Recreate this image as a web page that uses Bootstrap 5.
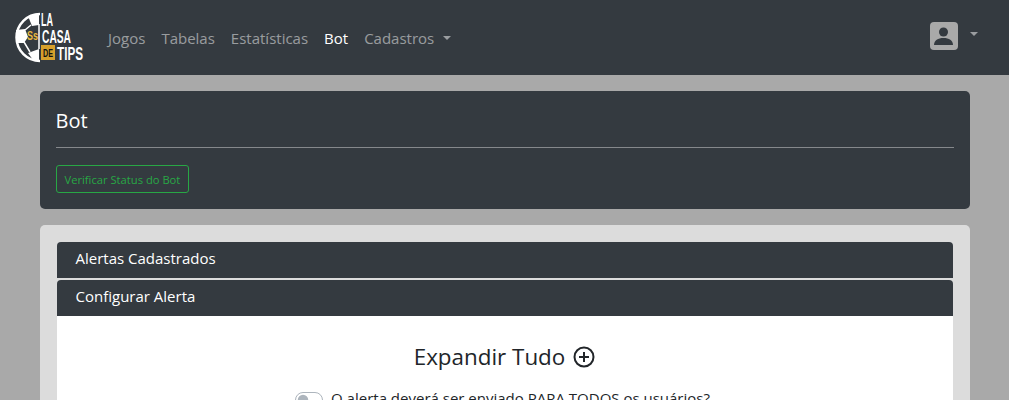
<!DOCTYPE html>
<html lang="pt-br">
  <head>
    <meta charset="utf-8">
    <title>Bot - La Casa de Tips</title>
    <link href="https://cdn.jsdelivr.net/npm/bootstrap@5.3.0/dist/css/bootstrap.min.css" rel="stylesheet">
    <style>
      html, body { height: 100%; overflow: hidden; }
      body { background: #a9a9a9; font-family: "Open Sans", "Noto Sans", sans-serif; color: #212529; }
      .top-bar { background: #343a40; height: 75px; padding: 0 16px 0 14px; }
      .top-bar .navbar-brand { padding: 0; margin-right: 14px; line-height: 0; }
      .top-bar .nav-link { color: rgba(255,255,255,.5); font-size: 15px; padding: 8px; line-height: 24px; }
      .top-bar .nav-link.active { color: #fff; }
      .top-bar .nav-link.dropdown-toggle::after { margin-left: 9px; }
      .user-toggle { color: rgba(255,255,255,.5); display: flex; align-items: center; padding: 0; margin-right: 15px; margin-top: -3px; }
      .user-toggle::after { margin-left: 12px; margin-top: -4px; }
      .page-wrap { width: 960px; max-width: none; padding: 16px 15px 0; margin: 0 auto; }
      .bot-card { background: #343a40; border-radius: 5px; padding: 16px; height: 118px; color: #fff; }
      .bot-title { font-size: 20px; line-height: 28px; font-weight: 400; margin: 0; }
      .bot-rule { border: 0; border-top: 1px solid #fff; opacity: .4; margin: 12px 0 17px; }
      .btn-status { font-size: 11.2px; line-height: 17px; padding: 4px 8px; border-radius: 3px; height: 28px; color: #28a745; border: 1px solid #28a745; background: transparent; }
      .alert-card { background: #dcdcdc; border-radius: 5px 5px 0 0; margin-top: 16px; padding: 17px; height: 300px; }
      .acc-head { background: #343a40; color: #fff; height: 36px; line-height: 33px; padding: 0 19px; font-size: 15px; border-radius: 4px 4px 0 0; margin-bottom: 2px; }
      .acc-body { background: #fff; height: 200px; margin-top: -2px; text-align: center; padding-top: 24px; }
      .expand-title { font-size: 22.4px; line-height: 34px; margin: 0; display: flex; align-items: center; justify-content: center; gap: 8px; }
      .send-all { margin-top: 13px; font-size: 15px; display: flex; justify-content: center; align-items: flex-start; gap: 8px; padding: 0 4px 0 0; }
      .send-all .form-check-input { width: 28px; height: 16px; margin: 5px 0 0; background-color: #fff; border-color: #adb5bd; background-image: url("data:image/svg+xml,%3csvg xmlns='http://www.w3.org/2000/svg' viewBox='-4 -4 8 8'%3e%3ccircle r='3' fill='%23adb5bd'/%3e%3c/svg%3e"); }
    </style>
  </head>
  <body>
    <nav class="navbar navbar-expand top-bar">
      <a class="navbar-brand" href="#">
        <svg width="72" height="56" viewBox="14 10 72 56" role="img" aria-label="La Casa de Tips">
          <path d="M40 14A23.500 23.500 0 0 0 40 61" fill="none" stroke="#fff" stroke-width="2.500"/>
          <path d="M28 16 39 13V25L32 26zM16 30 25 29 28 37 24 43 17 43zM28 53 39 49V61L33 60z" fill="#fff"/>
          <path d="M31 25 25 30M24 42 30 52M39 24V49" fill="none" stroke="#fff" stroke-width="1.500"/>
          <text x="27" y="40" font-family="Liberation Sans" font-weight="700" font-size="13" fill="#eab93f" textLength="11" lengthAdjust="spacingAndGlyphs">Ss</text>
          <g font-family="Liberation Sans" font-weight="700" font-size="17.500" fill="#fff">
            <text x="41" y="26" textLength="12" lengthAdjust="spacingAndGlyphs">LA</text>
            <text x="42" y="43" textLength="29" lengthAdjust="spacingAndGlyphs">CASA</text>
            <rect x="41" y="45" width="14" height="15" fill="#d7a02c"/>
            <text x="43" y="57" font-size="11" fill="#111" textLength="10" lengthAdjust="spacingAndGlyphs">DE</text>
            <text x="57" y="60" font-size="19" textLength="26" lengthAdjust="spacingAndGlyphs">TIPS</text>
          </g>
        </svg>
      </a>
      <ul class="navbar-nav me-auto">
        <li class="nav-item"><a class="nav-link" href="#">Jogos</a></li>
        <li class="nav-item"><a class="nav-link" href="#">Tabelas</a></li>
        <li class="nav-item"><a class="nav-link" href="#">Estatísticas</a></li>
        <li class="nav-item"><a class="nav-link active" href="#">Bot</a></li>
        <li class="nav-item"><a class="nav-link dropdown-toggle" href="#">Cadastros</a></li>
      </ul>
      <a class="user-toggle dropdown-toggle" href="#" aria-label="Usuário">
        <svg width="28" height="28" viewBox="0 0 28 28">
          <rect width="28" height="28" rx="4" fill="#a9a9a9"/>
          <circle cx="13.500" cy="10" r="4.500" fill="#343a40"/>
          <path d="M4 23c0-4.500 4-7 9.500-7s9.500 2.500 9.500 7z" fill="#343a40"/>
        </svg>
      </a>
    </nav>
    <div class="page-wrap">
      <div class="bot-card">
        <h1 class="bot-title">Bot</h1>
        <hr class="bot-rule">
        <button type="button" class="btn btn-status">Verificar Status do Bot</button>
      </div>
      <div class="alert-card">
        <div class="acc-head">Alertas Cadastrados</div>
        <div class="acc-head">Configurar Alerta</div>
        <div class="acc-body">
          <h2 class="expand-title">Expandir Tudo
            <svg width="22" height="22" viewBox="0 0 22 22" fill="none" stroke="#212529" stroke-width="2"><circle cx="11" cy="11" r="9.500"/><path d="M11 6v10M6 11h10"/></svg>
          </h2>
          <div class="send-all form-switch">
            <input class="form-check-input" type="checkbox" role="switch" id="sendAll">
            <label for="sendAll">O alerta deverá ser enviado PARA TODOS os usuários?</label>
          </div>
        </div>
      </div>
    </div>
  </body>
</html>
